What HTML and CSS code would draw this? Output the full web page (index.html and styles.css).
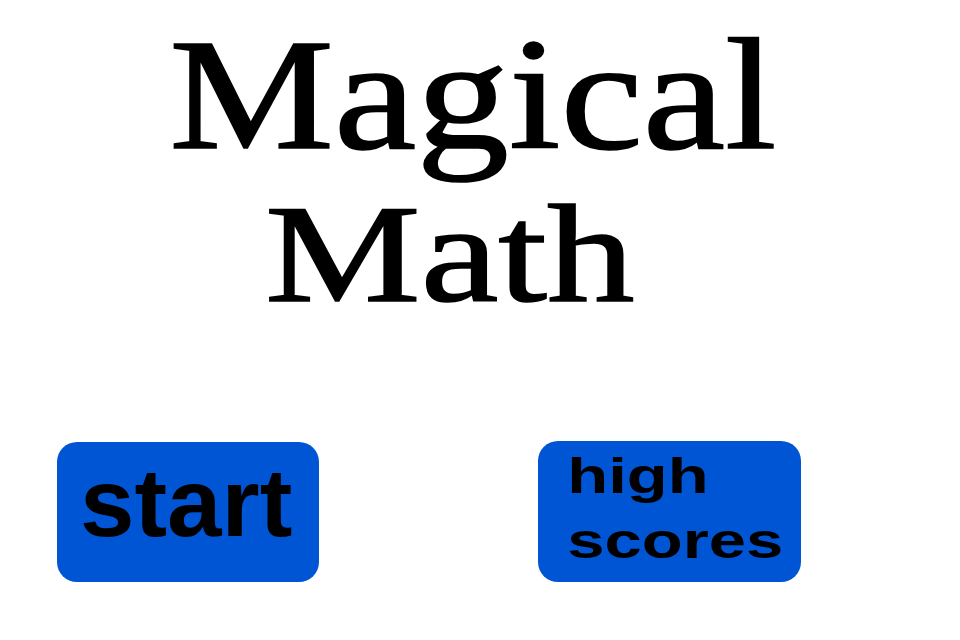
FILE: index.html
```html
<!DOCTYPE html>
<html lang="en">
<head>
<meta charset="utf-8">
<title>Magical Math</title>
<link rel="stylesheet" href="styles.css">
</head>
<body>
<main class="screen">
  <h1 class="title">
    <span class="title-line line-one"><span class="word word-one">Magical</span></span>
    <span class="title-line line-two"><span class="word word-two">Math</span></span>
  </h1>
  <div class="menu">
    <button class="btn btn-start" type="button"><span class="start-label">start</span></button>
    <button class="btn btn-scores" type="button">
      <span class="scores-line"><span class="scores-word">high</span></span>
      <span class="scores-line"><span class="scores-word">scores</span></span>
    </button>
  </div>
</main>
</body>
</html>
```

FILE: styles.css
```css
html, body {
  margin: 0;
  padding: 0;
  background: #ffffff;
}

.screen {
  width: 960px;
  height: 640px;
  overflow: hidden;
  display: flex;
  flex-direction: column;
}

.title {
  margin: 0;
  padding-top: 13px;
  font-family: "Liberation Serif", "Times New Roman", serif;
  font-weight: normal;
  color: #000000;
  text-align: center;
  -webkit-text-stroke: 1.6px #000000;
}

.title-line {
  display: block;
  white-space: nowrap;
}

.line-one {
  font-size: 158px;
  line-height: 164px;
}

.line-two {
  font-size: 140px;
  line-height: 154px;
}

.word {
  display: inline-block;
}

.word-one {
  margin-right: 14px;
  transform: scaleX(1.173);
}

.word-two {
  margin-right: 61px;
  transform: scaleX(1.25);
}

.menu {
  display: flex;
  align-items: flex-start;
  gap: 219px;
  padding-left: 57px;
  margin-top: 110px;
}

.btn {
  box-sizing: border-box;
  width: 262px;
  height: 140px;
  border: none;
  border-radius: 20px;
  background: #0055d4;
  color: #000000;
  font-family: "Liberation Sans", Arial, sans-serif;
  font-weight: bold;
  text-align: left;
  margin: 0;
  display: flex;
  flex-direction: column;
  align-items: flex-start;
  justify-content: flex-start;
}

.btn-start {
  margin-top: 1px;
  padding: 11px 0 0 23px;
  font-size: 97px;
  line-height: 100px;
}

.start-label {
  display: inline-block;
  transform: scaleX(1.01);
  transform-origin: 3px center;
}

.btn-scores {
  width: 263px;
  height: 141px;
  padding: 3px 0 0 30px;
  font-size: 50px;
  line-height: 65px;
}

.scores-line {
  display: block;
  white-space: nowrap;
}

.scores-word {
  display: inline-block;
  transform: scaleX(1.34);
  transform-origin: 2px center;
}
```
